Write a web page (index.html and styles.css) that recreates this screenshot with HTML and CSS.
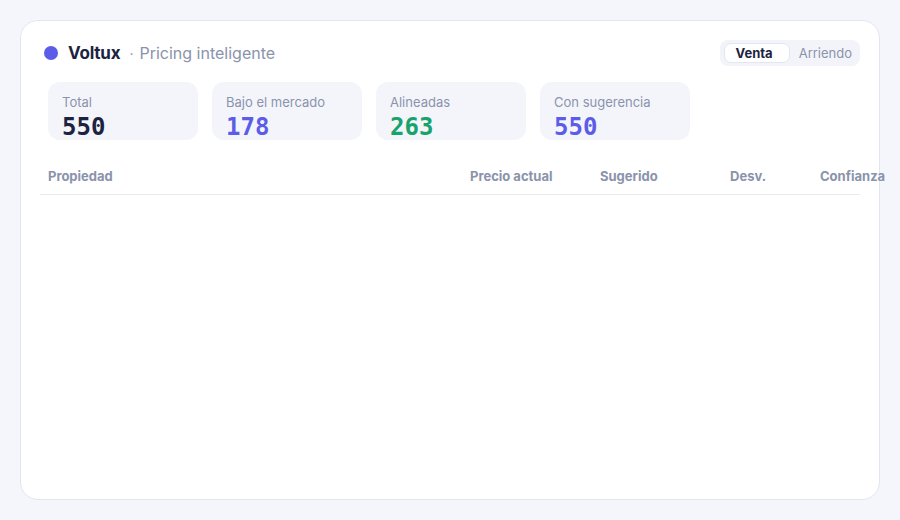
FILE: index.html
```html
<!DOCTYPE html>
<html lang="es">
<head>
  <meta charset="UTF-8" />
  <meta name="viewport" content="width=device-width, initial-scale=1.0"/>
  <title>Voltux · Pricing inteligente</title>
  <link rel="stylesheet" href="styles.css">
</head>
<body>
  <div class="card">
    <div class="top">
      <div class="brand">
        <span class="dot"></span>
        <span class="name">Voltux</span>
        <span class="sep">·</span>
        <span class="tagline">Pricing inteligente</span>
      </div>
      <div class="toggle">
        <div class="toggle-btn active">Venta</div>
        <div class="toggle-btn">Arriendo</div>
      </div>
    </div>

    <!-- resumen -->
    <div class="stats">
      <div class="stat">
        <div class="stat-label">Total</div>
        <div class="stat-value">550</div>
      </div>
      <div class="stat">
        <div class="stat-label">Bajo el mercado</div>
        <div class="stat-value purple">178</div>
      </div>
      <div class="stat">
        <div class="stat-label">Alineadas</div>
        <div class="stat-value green">263</div>
      </div>
      <div class="stat">
        <div class="stat-label">Con sugerencia</div>
        <div class="stat-value purple">550</div>
      </div>
    </div>

    <table class="props">
      <thead>
        <tr>
          <th class="col-prop">Propiedad</th>
          <th class="col-price">Precio actual</th>
          <th class="col-sug">Sugerido</th>
          <th class="col-dev">Desv.</th>
          <th class="col-conf">Confianza</th>
        </tr>
      </thead>
      <tbody></tbody>
    </table>
  </div>
</body>
</html>
```

FILE: styles.css
```css
body {
  margin: 0;
  padding: 20px;
  background-color: #f5f6fb;
  font-family: 'Inter', 'Noto Sans', sans-serif;
  color: #1c2340;
}

.card {
  height: 480px;
  box-sizing: border-box;
  background-color: #fff;
  border: 1px solid #e2e6f0;
  border-radius: 18px;
  padding: 19px 19px;
}

.top {
  display: flex;
  justify-content: space-between;
  align-items: center;
  height: 26px;
}

.brand {
  display: flex;
  align-items: center;
  padding-left: 4px;
}

.dot {
  width: 14px;
  height: 14px;
  border-radius: 50%;
  background-color: #5b5ce8;
  margin-right: 10px;
}

.name {
  font-size: 17px;
  font-weight: 700;
  letter-spacing: -0.2px;
}

.sep {
  color: #8a93ab;
  font-size: 14px;
  margin: 0 6px 0 9px;
}

.tagline {
  color: #8a93ab;
  font-size: 16px;
}

.toggle {
  display: flex;
  background-color: #f3f4f9;
  border-radius: 8px;
  padding: 3px 0 3px 4px;
}

.toggle-btn {
  font-size: 13px;
  line-height: 16px;
  color: #8a93ab;
  padding: 1px 7px 1px 8px;
  border: 1px solid transparent;
  border-radius: 7px;
}

.toggle-btn.active {
  background-color: #fff;
  border-color: #e2e6f0;
  color: #1c2340;
  font-weight: 700;
  padding: 1px 16px 1px 11px;
}

.stats {
  display: flex;
  gap: 14px;
  margin: 16px 0 0 8px;
}

.stat {
  width: 150px;
  height: 58px;
  box-sizing: border-box;
  background-color: #f4f5fb;
  border-radius: 12px;
  padding: 12px 14px 0;
  overflow: hidden;
}

.stat-label {
  font-size: 13px;
  color: #8a93ab;
  line-height: 16px;
}

.stat-value {
  font-family: 'DejaVu Sans Mono', monospace;
  font-weight: 700;
  font-size: 24px;
  line-height: 26px;
  margin-top: 4px;
  color: #1c2340;
}

.purple {
  color: #5b5ce8;
}

.green {
  color: #17a36b;
}

.props {
  width: 820px;
  margin-top: 20px;
  border-collapse: collapse;
  table-layout: fixed;
}

.props th {
  box-sizing: border-box;
  text-align: left;
  font-size: 13px;
  font-weight: 700;
  color: #8a93ab;
  padding: 8px 8px 10px;
  border-bottom: 1px solid #e8ebf2;
  white-space: nowrap;
}

.col-prop { width: 422px; }
.col-price { width: 130px; }
.col-sug { width: 130px; }
.col-dev { width: 90px; }
```
